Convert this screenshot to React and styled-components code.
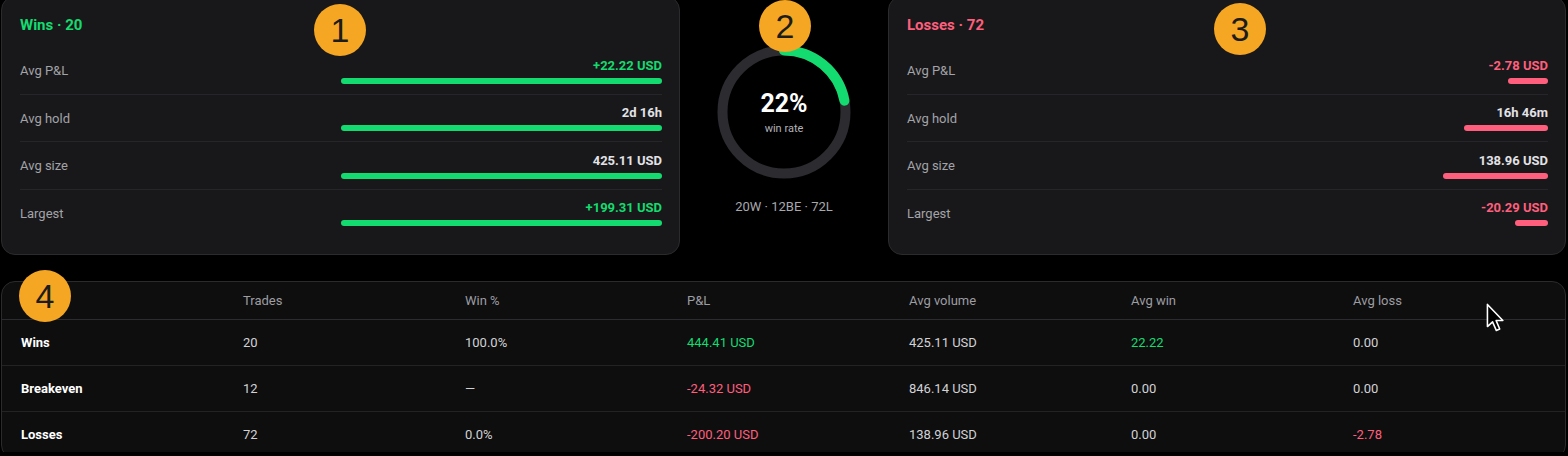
import styled, { createGlobalStyle } from 'styled-components';

const GlobalStyle = createGlobalStyle`
  html, body {
    margin: 0;
    padding: 0;
    background: #000;
  }
  body {
    font-family: Roboto, "Liberation Sans", Arial, sans-serif;
    color: #e4e4e7;
    overflow: hidden;
  }
`;

const GREEN = '#14db6f';
const RED = '#ff5f7d';

const wins = {
  title: 'Wins · 20',
  tone: 'win',
  rows: [
    { label: 'Avg P&L', value: '+22.22 USD', colored: true, pct: 100 },
    { label: 'Avg hold', value: '2d 16h', pct: 100 },
    { label: 'Avg size', value: '425.11 USD', pct: 100 },
    { label: 'Largest', value: '+199.31 USD', colored: true, pct: 100 },
  ],
};

const losses = {
  title: 'Losses · 72',
  tone: 'loss',
  rows: [
    { label: 'Avg P&L', value: '-2.78 USD', colored: true, pct: (2.78 / 22.22) * 100 },
    { label: 'Avg hold', value: '16h 46m', pct: (16.77 / 64) * 100 },
    { label: 'Avg size', value: '138.96 USD', pct: (138.96 / 425.11) * 100 },
    { label: 'Largest', value: '-20.29 USD', colored: true, pct: (20.29 / 199.31) * 100 },
  ],
};

const tableRows = [
  { name: 'Wins', trades: '20', winPct: '100.0%', pnl: '444.41 USD', pnlTone: 'win', vol: '425.11 USD', avgWin: '22.22', avgWinTone: 'win', avgLoss: '0.00' },
  { name: 'Breakeven', trades: '12', winPct: '—', pnl: '-24.32 USD', pnlTone: 'loss', vol: '846.14 USD', avgWin: '0.00', avgLoss: '0.00' },
  { name: 'Losses', trades: '72', winPct: '0.0%', pnl: '-200.20 USD', pnlTone: 'loss', vol: '138.96 USD', avgWin: '0.00', avgLoss: '-2.78', avgLossTone: 'loss' },
];

const toneColor = (tone, fallback) => (tone === 'win' ? GREEN : tone === 'loss' ? RED : fallback);

function App() {
  const winRate = 22;
  const r = 61.5;
  const circ = 2 * Math.PI * r;

  return (
    <>
      <GlobalStyle />
      <Page>
        <TopRow>
          <SideCard data={wins} />
          <Center>
            <Ring width="134" height="134" viewBox="0 0 134 134">
              <circle cx="67" cy="67" r={r} fill="none" stroke="#2c2c30" strokeWidth="10" />
              <circle
                cx="67"
                cy="67"
                r={r}
                fill="none"
                stroke={GREEN}
                strokeWidth="10"
                strokeLinecap="round"
                strokeDasharray={`${(circ * winRate) / 100} ${circ}`}
                transform="rotate(-90 67 67)"
              />
            </Ring>
            <RingLabel>
              <RatePct>{winRate}%</RatePct>
              <RateCaption>win rate</RateCaption>
            </RingLabel>
            <Counts>20W · 12BE · 72L</Counts>
          </Center>
          <SideCard data={losses} />
        </TopRow>

        <Table>
          <HeadRow>
            <HeadCell />
            <HeadCell>Trades</HeadCell>
            <HeadCell>Win %</HeadCell>
            <HeadCell>P&amp;L</HeadCell>
            <HeadCell>Avg volume</HeadCell>
            <HeadCell>Avg win</HeadCell>
            <HeadCell>Avg loss</HeadCell>
          </HeadRow>
          {tableRows.map((row) => (
            <BodyRow key={row.name}>
              <NameCell>{row.name}</NameCell>
              <Cell>{row.trades}</Cell>
              <Cell>{row.winPct}</Cell>
              <Cell $tone={row.pnlTone}>{row.pnl}</Cell>
              <Cell>{row.vol}</Cell>
              <Cell $tone={row.avgWinTone}>{row.avgWin}</Cell>
              <Cell $tone={row.avgLossTone}>{row.avgLoss}</Cell>
            </BodyRow>
          ))}
        </Table>

        <Badge $x={340} $y={34}>1</Badge>
        <Badge $x={785} $y={30}>2</Badge>
        <Badge $x={1240} $y={33}>3</Badge>
        <Badge $x={45} $y={300}>4</Badge>

        <Cursor width="20" height="30" viewBox="0 0 14 21">
          <path
            d="M1 1 L1 16.5 L4.6 13.2 L7.2 19.2 L9.6 18.2 L7.1 12.3 L11.8 12.3 Z"
            fill="#000"
            stroke="#fff"
            strokeWidth="1.1"
            strokeLinejoin="round"
          />
        </Cursor>
      </Page>
    </>
  );
}

function SideCard({ data }) {
  return (
    <Card>
      <CardTitle $tone={data.tone}>{data.title}</CardTitle>
      {data.rows.map((row) => (
        <StatRow key={row.label}>
          <StatLabel>{row.label}</StatLabel>
          <StatRight>
            <StatValue $tone={row.colored ? data.tone : null}>{row.value}</StatValue>
            <Bar $tone={data.tone} style={{ width: `${row.pct}%` }} />
          </StatRight>
        </StatRow>
      ))}
    </Card>
  );
}

export default App;

const Page = styled.div`
  position: relative;
  width: 1565px;
  height: 456px;
  padding-left: 1px;
`;

const TopRow = styled.div`
  display: grid;
  grid-template-columns: 679px 208px 678px;
  margin-top: -4px;
`;

const Card = styled.div`
  background: #18181a;
  border: 1px solid #2b2b2e;
  border-radius: 14px;
  padding: 17px 17px 17px 18px;
  height: 259px;
  box-sizing: border-box;
`;

const CardTitle = styled.div`
  font-size: 15px;
  font-weight: 700;
  line-height: 22px;
  color: ${(p) => toneColor(p.$tone)};
  margin-bottom: 11px;
`;

const StatRow = styled.div`
  display: flex;
  align-items: center;
  justify-content: space-between;
  padding: 10.5px 0 10px;
  border-bottom: 1px solid #26262a;

  &:last-child {
    border-bottom: none;
  }
`;

const StatLabel = styled.div`
  font-size: 13px;
  color: #a3a3a8;
`;

const StatRight = styled.div`
  width: 50%;
  display: flex;
  flex-direction: column;
  align-items: flex-end;
  gap: 4px;
`;

const StatValue = styled.div`
  font-size: 13px;
  font-weight: 700;
  line-height: 16px;
  color: ${(p) => toneColor(p.$tone, '#e2e2e6')};
`;

const Bar = styled.div`
  height: 6px;
  border-radius: 3px;
  background: ${(p) => toneColor(p.$tone)};
`;

const Center = styled.div`
  position: relative;
  display: flex;
  flex-direction: column;
  align-items: center;
  padding-top: 49px;
`;

const Ring = styled.svg`
  display: block;
`;

const RingLabel = styled.div`
  position: absolute;
  top: 49px;
  left: 0;
  right: 0;
  height: 134px;
  display: flex;
  flex-direction: column;
  align-items: center;
  justify-content: center;
`;

const RatePct = styled.div`
  font-size: 25px;
  font-weight: 700;
  line-height: 28px;
  color: #fff;
`;

const RateCaption = styled.div`
  font-size: 11px;
  color: #b2b2b7;
  margin-top: 4px;
`;

const Counts = styled.div`
  margin-top: 20px;
  font-size: 13px;
  color: #a8a8ad;
`;

const Table = styled.div`
  margin-top: 26px;
  background: #0e0e0f;
  border: 1px solid #2b2b2e;
  border-radius: 14px;
  overflow: hidden;
`;

const HeadRow = styled.div`
  display: grid;
  grid-template-columns: repeat(7, 222px);
  height: 37px;
  align-items: center;
  border-bottom: 1px solid #2c2c30;
`;

const HeadCell = styled.div`
  padding-left: 19px;
  font-size: 13px;
  color: #9d9da2;
`;

const BodyRow = styled.div`
  display: grid;
  grid-template-columns: repeat(7, 222px);
  height: 45px;
  align-items: center;
  border-bottom: 1px solid #232326;

  &:last-child {
    border-bottom: none;
    height: 46px;
  }
`;

const Cell = styled.div`
  padding-left: 19px;
  padding-bottom: 1px;
  font-size: 13px;
  color: ${(p) => toneColor(p.$tone, '#d2d2d6')};
`;

const NameCell = styled(Cell)`
  font-weight: 700;
  color: #fff;
`;

const Badge = styled.div`
  position: absolute;
  left: ${(p) => p.$x - 26}px;
  top: ${(p) => p.$y - 26}px;
  width: 52px;
  height: 52px;
  border-radius: 50%;
  background: #f5a623;
  color: #1c1c1c;
  font-family: "Liberation Sans", Arial, sans-serif;
  font-size: 34px;
  line-height: 52px;
  text-align: center;
`;

const Cursor = styled.svg`
  position: absolute;
  left: 1486px;
  top: 307px;
`;
